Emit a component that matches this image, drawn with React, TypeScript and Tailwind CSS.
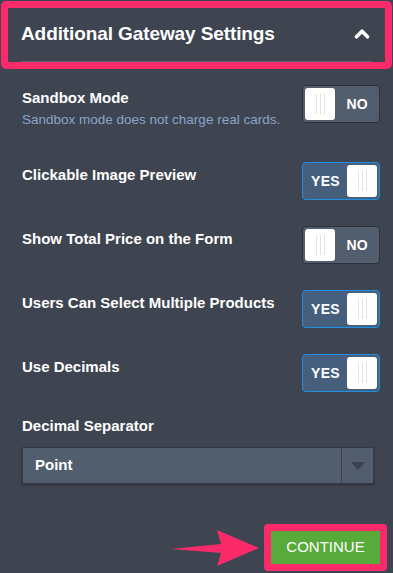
import { ChevronUp } from "lucide-react";

type Row = { label: string; hint?: string; on: boolean };

const rows: Row[] = [
  { label: "Sandbox Mode", hint: "Sandbox mode does not charge real cards.", on: false },
  { label: "Clickable Image Preview", on: true },
  { label: "Show Total Price on the Form", on: false },
  { label: "Users Can Select Multiple Products", on: true },
  { label: "Use Decimals", on: true },
];

const Knob = () => (
  <div className="flex h-[32px] w-[30px] items-center justify-center gap-[3px] rounded-[3px] bg-white">
    <span className="h-[20px] w-px bg-[#e3e3e3]" />
    <span className="h-[20px] w-px bg-[#e3e3e3]" />
    <span className="h-[20px] w-px bg-[#e3e3e3]" />
  </div>
);

const Toggle = ({ on }: { on: boolean }) =>
  on ? (
    <div className="flex h-[38px] w-[78px] shrink-0 items-center justify-between rounded-[4px] border border-[#1f8fe5] bg-[#455f7d] pl-[8px] pr-[2px]">
      <span className="text-[14px] font-black tracking-[0.3px] text-white">YES</span>
      <Knob />
    </div>
  ) : (
    <div className="flex h-[38px] w-[78px] shrink-0 items-center justify-between rounded-[4px] border border-[#2c323c] bg-[#525d6e] pl-[2px] pr-[11px]">
      <Knob />
      <span className="text-[14px] font-black tracking-[0.3px] text-white">NO</span>
    </div>
  );

const App = () => {
  return (
    <div
      className="relative h-[573px] w-[393px] overflow-hidden bg-[#3e4450] pt-px"
      style={{ fontFamily: '"Liberation Sans", Arial, sans-serif' }}
    >
      {/* header */}
      <div className="mx-px h-[68px] rounded-[5px] border-[7px] border-[#fb2b6b]">
        <div className="mx-[13px] flex h-full items-center justify-between border-b border-[#5b6877] pb-[1px]">
          <h2 className="text-[19px] font-bold tracking-[-0.1px] text-white">Additional Gateway Settings</h2>
          <ChevronUp className="mr-[-1px] h-[22px] w-[22px] text-white" strokeWidth={4} />
        </div>
      </div>

      {/* options */}
      <div className="flex flex-col pl-[22px] pr-[13px] pt-[16px]">
        {rows.map((row, i) => (
          <div
            key={row.label}
            className={`flex items-start justify-between ${i === 0 ? "" : i === 1 ? "mt-[34px]" : "mt-[26px]"}`}
          >
            <div className="pt-[3px]">
              <div className="text-[15px] font-bold leading-[20px] text-white">{row.label}</div>
              {row.hint && (
                <div className="mt-[4px] text-[13.5px] leading-[16px] text-[#8ba5c9]">{row.hint}</div>
              )}
            </div>
            <Toggle on={row.on} />
          </div>
        ))}

        <div className="mt-[24px] text-[15px] font-bold leading-[20px] text-white">Decimal Separator</div>
        <div className="mt-[11px] flex h-[37px] w-[352px] items-stretch border border-[#343a45] bg-[#525d6e] shadow-[0_1px_2px_rgba(0,0,0,0.35)]">
          <div className="flex flex-1 items-center pl-[12px] text-[15px] font-bold text-white">Point</div>
          <div className="flex w-[32px] items-center justify-center border-l border-[#3a414c]">
            <div className="h-0 w-0 border-x-[7px] border-t-[8px] border-x-transparent border-t-[#3a414c]" />
          </div>
        </div>
      </div>

      {/* continue */}
      <div className="absolute bottom-[2px] right-[6px] flex items-center">
        <svg width="90" height="40" viewBox="0 0 90 40" className="mr-[3px]">
          <path d="M0 21 L50 16 L46 2 L88 20 L46 38 L50 25 Z" fill="#fb2b6b" />
        </svg>
        <div className="rounded-[4px] border-[7px] border-[#fb2b6b]">
          <button className="flex h-[33px] w-[109px] items-center justify-center bg-[#58aa3a] text-[15px] text-white">
            CONTINUE
          </button>
        </div>
      </div>
    </div>
  );
};

export default App;
